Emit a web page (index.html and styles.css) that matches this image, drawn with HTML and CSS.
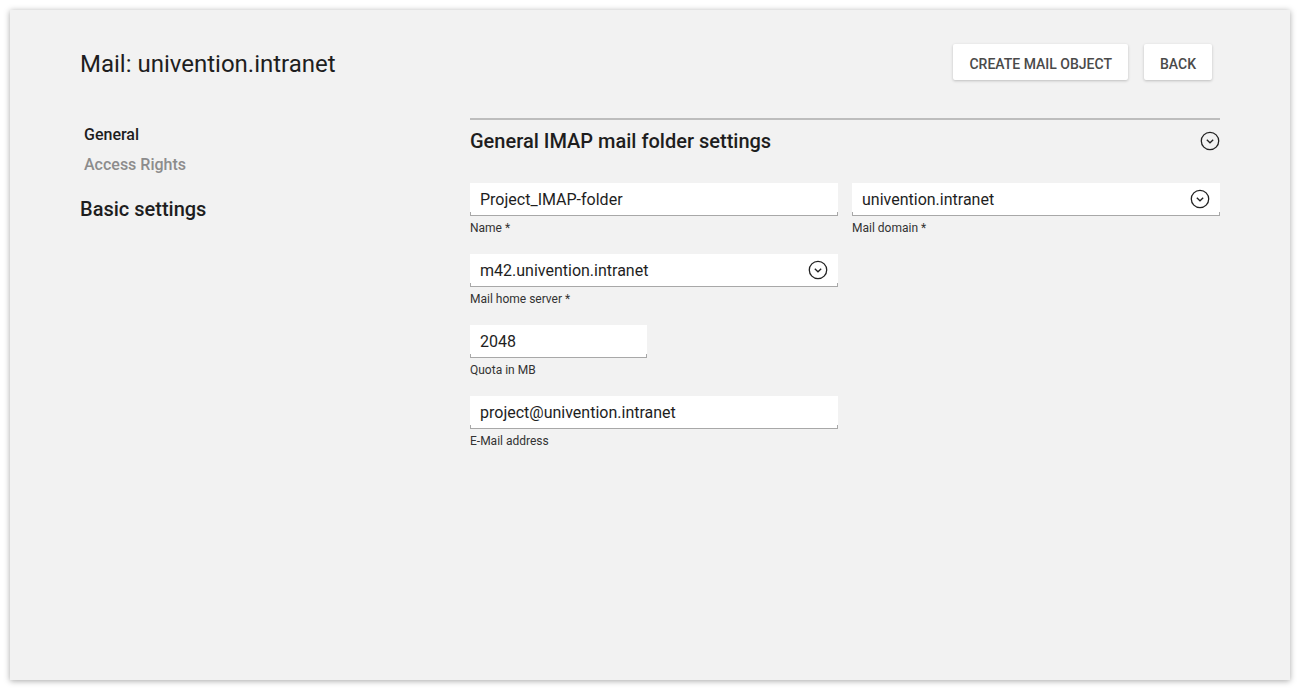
FILE: index.html
```html
<!DOCTYPE html>
<html>
<head>
<meta charset="utf-8">
<link rel="stylesheet" href="styles.css">
</head>
<body>
<div class="window">
  <header class="topbar">
    <h1 class="title">Mail: univention.intranet</h1>
    <div class="actions">
      <button class="btn">CREATE MAIL OBJECT</button>
      <button class="btn">BACK</button>
    </div>
  </header>
  <div class="content">
    <nav class="sidenav">
      <div class="tab active">General</div>
      <div class="tab">Access Rights</div>
      <div class="group">Basic settings</div>
    </nav>
    <section class="section">
      <div class="section-head">
        <h2 class="section-title">General IMAP mail folder settings</h2>
        <svg class="chev" width="20" height="20" viewBox="0 0 20 20"><circle cx="10" cy="10" r="8.7" fill="none" stroke="#222" stroke-width="1.3"/><path d="M6.8 8.8 L10 11.8 L13.2 8.8" fill="none" stroke="#222" stroke-width="1.3"/></svg>
      </div>
      <div class="row">
        <div class="field wide">
          <div class="input"><span>Project_IMAP-folder</span></div>
          <div class="label">Name *</div>
        </div>
        <div class="field wide">
          <div class="input"><span>univention.intranet</span><svg class="chev" width="20" height="20" viewBox="0 0 20 20"><circle cx="10" cy="10" r="8.7" fill="none" stroke="#222" stroke-width="1.3"/><path d="M6.8 8.8 L10 11.8 L13.2 8.8" fill="none" stroke="#222" stroke-width="1.3"/></svg></div>
          <div class="label">Mail domain *</div>
        </div>
      </div>
      <div class="row">
        <div class="field wide">
          <div class="input"><span>m42.univention.intranet</span><svg class="chev" width="20" height="20" viewBox="0 0 20 20"><circle cx="10" cy="10" r="8.7" fill="none" stroke="#222" stroke-width="1.3"/><path d="M6.8 8.8 L10 11.8 L13.2 8.8" fill="none" stroke="#222" stroke-width="1.3"/></svg></div>
          <div class="label">Mail home server *</div>
        </div>
      </div>
      <div class="row">
        <div class="field narrow">
          <div class="input"><span>2048</span></div>
          <div class="label">Quota in MB</div>
        </div>
      </div>
      <div class="row">
        <div class="field wide">
          <div class="input"><span>project@univention.intranet</span></div>
          <div class="label">E-Mail address</div>
        </div>
      </div>
    </section>
  </div>
</div>
</body>
</html>
```
FILE: styles.css
```css
* { box-sizing: border-box; }
html, body { margin: 0; padding: 0; background: #ffffff; }
body {
  font-family: Roboto, "Liberation Sans", sans-serif;
  color: #1e1e1e;
  padding: 10px;
  height: 690px;
  overflow: hidden;
}
.window {
  height: 670px;
  background: #f2f2f2;
  box-shadow: 0 1px 6px rgba(0,0,0,0.35);
  padding: 34px 70px 0 70px;
}
.topbar {
  display: flex;
  align-items: center;
  justify-content: space-between;
  height: 36px;
}
.title {
  margin: 0;
  padding-top: 4px;
  font-size: 24px;
  font-weight: 400;
  color: #1e1e1e;
  line-height: 36px;
}
.actions {
  display: flex;
  gap: 16px;
  margin-right: 8px;
}
.btn {
  font-family: Roboto, "Liberation Sans", sans-serif;
  font-size: 14px;
  font-weight: 500;
  color: #4a4a4a;
  background: #ffffff;
  border: none;
  border-radius: 2px;
  height: 36px;
  padding: 3px 16px 0 16px;
  box-shadow: 0 1px 3px rgba(0,0,0,0.22);
}
.content {
  display: flex;
  margin-top: 38px;
}
.sidenav {
  width: 390px;
  flex: none;
  padding-top: 2px;
}
.tab {
  font-size: 16px;
  font-weight: 500;
  line-height: 30px;
  padding-left: 4px;
  color: #8c8c8c;
}
.tab.active { color: #1e1e1e; }
.group {
  margin-top: 15px;
  font-size: 20px;
  font-weight: 500;
  line-height: 28px;
  color: #1e1e1e;
}
.section {
  flex: 1;
  border-top: 2px solid #bdbdbd;
}
.section-head {
  display: flex;
  align-items: center;
  justify-content: space-between;
  height: 42px;
  margin-bottom: 21px;
}
.section-title {
  margin: 0;
  font-size: 20px;
  font-weight: 500;
  color: #1e1e1e;
}
.chev { display: block; flex: none; }
.row {
  display: flex;
  gap: 14px;
  margin-bottom: 18px;
}
.field.wide { width: 368px; }
.field.narrow { width: 177px; }
.input {
  position: relative;
  height: 33px;
  background: #ffffff;
  border-bottom: 1px solid #a8a8a8;
  display: flex;
  align-items: center;
  justify-content: space-between;
  padding: 0 10px;
  font-size: 16px;
  color: #1e1e1e;
}
.input::after {
  content: "";
  position: absolute;
  left: 0;
  right: 0;
  bottom: -1px;
  height: 4px;
  border-left: 1px solid #a8a8a8;
  border-right: 1px solid #a8a8a8;
}
.label {
  margin-top: 5px;
  font-size: 12px;
  line-height: 15px;
  color: #333333;
}
```
